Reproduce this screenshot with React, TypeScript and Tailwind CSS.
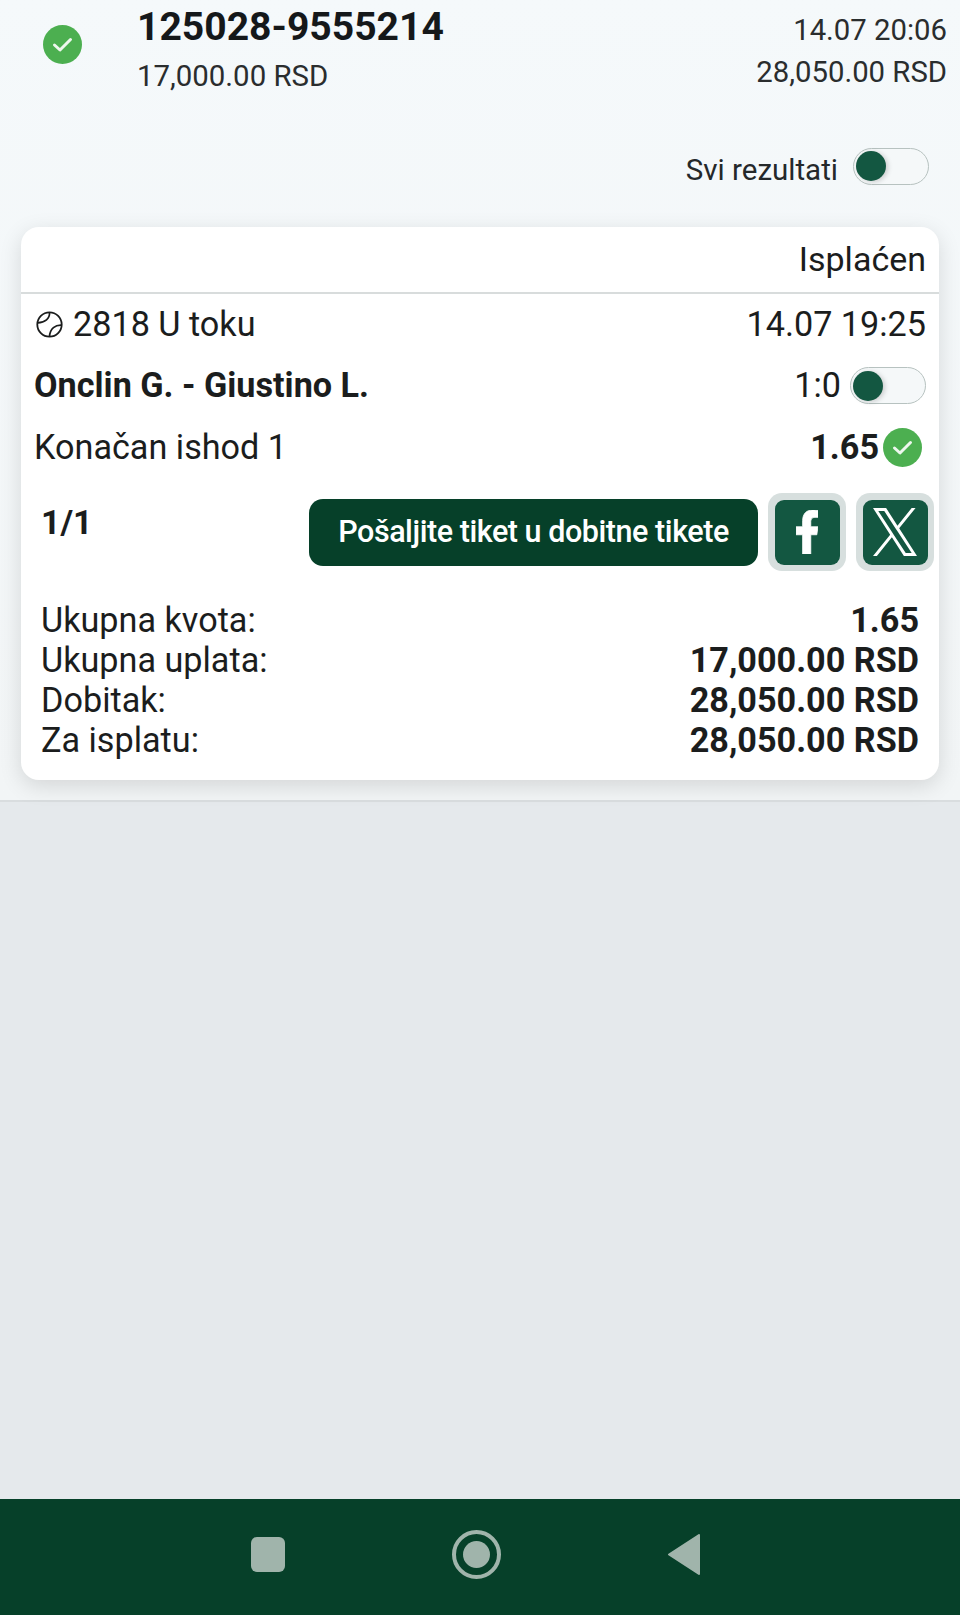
import React from "react";

function CheckBadge() {
  return (
    <svg width="39" height="39" viewBox="0 0 39 39" className="block shrink-0">
      <circle cx="19.5" cy="19.5" r="19.5" fill="#4caf50" />
      <path d="M11.5 20l5.5 5L27.5 14.5" fill="none" stroke="#eef7ee" strokeWidth="3" strokeLinecap="round" strokeLinejoin="round" />
    </svg>
  );
}

function Toggle() {
  return (
    <div className="w-[76px] h-[37px] rounded-full border border-[#b7c2c0] bg-[#f5f8f9] flex items-center pl-[2px] shrink-0">
      <div className="w-[30px] h-[30px] rounded-full bg-[#135741] shadow-[2px_1px_5px_rgba(0,0,0,0.18)]" />
    </div>
  );
}

function Ball() {
  return (
    <svg width="27" height="27" viewBox="0 0 27 27" className="block shrink-0">
      <circle cx="13.5" cy="13.5" r="12.2" fill="none" stroke="#1a1c1c" strokeWidth="1.8" />
      <path d="M13.5 1.4C14 7.5 9 11.5 1.5 11.8" fill="none" stroke="#1a1c1c" strokeWidth="1.7" />
      <path d="M25.6 14.2C19.5 13.8 14 17.5 13.5 25.6" fill="none" stroke="#1a1c1c" strokeWidth="1.7" />
    </svg>
  );
}

function Tile({ children }: { children: React.ReactNode }) {
  return (
    <div className="w-[78px] h-[78px] rounded-[14px] bg-[#d7dfde] flex items-center justify-center shrink-0">
      <div className="w-[65px] h-[65px] rounded-[9px] bg-[#135741] flex items-center justify-center">
        {children}
      </div>
    </div>
  );
}

function Sum({ label, value }: { label: string; value: string }) {
  return (
    <div className="flex justify-between items-center h-[40px] text-[34.2px]">
      <span>{label}</span>
      <span className="font-bold">{value}</span>
    </div>
  );
}

export default function App() {
  return (
    <div className="w-[960px] h-[1615px] flex flex-col overflow-hidden text-[#1b1d1d] bg-[#e5e9ec] font-['Roboto',sans-serif]">
      <div className="h-[802px] shrink-0 border-b-2 border-[#d9dddf] bg-gradient-to-b from-[#f5f9fb] to-[#f2f5f6] flex flex-col">
        <div className="h-[148px] shrink-0 flex pr-[13px]">
          <div className="w-[137px] pl-[43px] pt-[25px] shrink-0">
            <CheckBadge />
          </div>
          <div className="flex-1 flex flex-col">
            <div className="h-[53px] text-[39.1px] font-bold leading-[54px] text-[#15181a]">125028-9555214</div>
            <div className="h-[48px] text-[29.4px] leading-[46px] text-[#2a2d2e]">17,000.00 RSD</div>
          </div>
          <div className="flex flex-col items-end text-[29.3px] text-[#2a2d2e]">
            <div className="h-[51px] pt-[10px] leading-[40px]">14.07 20:06</div>
            <div className="h-[40px] leading-[42px]">28,050.00 RSD</div>
          </div>
        </div>
        <div className="h-[36px] shrink-0 flex items-center justify-end pr-[31px] gap-[15px]">
          <span className="text-[29.5px] pt-[8px] text-[#24282a]">Svi rezultati</span>
          <Toggle />
        </div>
        <div className="mx-[21px] mt-[43px] h-[553px] rounded-[18px] bg-white shadow-[0_6px_22px_rgba(0,0,0,0.13)] flex flex-col">
          <div className="h-[67px] shrink-0 border-b-2 border-[#d8dcdc] flex items-center justify-end pr-[13px] text-[34px]">
            Isplaćen
          </div>
          <div className="h-[62px] shrink-0 flex items-center justify-between pl-[15px] pr-[13px] text-[34.2px]">
            <div className="flex items-center gap-[10px]">
              <Ball />
              <span>2818 U toku</span>
            </div>
            <span>14.07 19:25</span>
          </div>
          <div className="h-[60px] shrink-0 flex items-center justify-between pl-[13px] pr-[13px] text-[34.2px]">
            <span className="font-bold">Onclin G. - Giustino L.</span>
            <div className="flex items-center gap-[9px]">
              <span>1:0</span>
              <Toggle />
            </div>
          </div>
          <div className="h-[64px] shrink-0 flex items-center justify-between pl-[13px] pr-[17px] text-[34.2px]">
            <span>Konačan ishod 1</span>
            <div className="flex items-center gap-[4px]">
              <span className="font-bold">1.65</span>
              <CheckBadge />
            </div>
          </div>
          <div className="mt-[13px] h-[78px] shrink-0 flex pl-[20px] pr-[5px]">
            <div className="flex-1 text-[34px] font-bold leading-[58px]">1/1</div>
            <div className="flex items-center gap-[10px]">
              <div className="w-[449px] h-[67px] rounded-[14px] bg-[#064029] text-white text-[30.5px] tracking-[-0.45px] font-medium flex items-center justify-center">
                Pošaljite tiket u dobitne tikete
              </div>
              <Tile>
                <svg width="22" height="44" viewBox="22 0 272 512" preserveAspectRatio="none" className="block">
                  <path fill="#ffffff" stroke="#ffffff" strokeWidth="10" d="M279.14 288l14.22-92.66h-88.91v-60.13c0-25.35 12.42-50.06 52.24-50.06h40.42V6.26S260.43 0 225.36 0c-73.22 0-121.08 44.38-121.08 124.72v70.62H22.89V288h81.39v224h100.17V288z" />
                </svg>
              </Tile>
              <Tile>
                <svg width="44" height="48" viewBox="0 0 1200 1227" preserveAspectRatio="none" className="block">
                  <path fill="#ffffff" fillRule="evenodd" d="M714.163 519.284L1160.89 0H1055.03L667.137 450.887L357.328 0H0L468.492 681.821L0 1226.37H105.866L515.491 750.218L842.672 1226.37H1200L714.137 519.284H714.163ZM569.165 687.828L521.697 619.934L144.011 79.6944H306.615L611.412 515.685L658.88 583.579L1055.08 1150.3H892.476L569.165 687.854V687.828Z" />
                </svg>
              </Tile>
            </div>
          </div>
          <div className="mt-[30px] pl-[20px] pr-[20px] flex flex-col">
            <Sum label="Ukupna kvota:" value="1.65" />
            <Sum label="Ukupna uplata:" value="17,000.00 RSD" />
            <Sum label="Dobitak:" value="28,050.00 RSD" />
            <Sum label="Za isplatu:" value="28,050.00 RSD" />
          </div>
        </div>
      </div>
      <div className="flex-1" />
      <div className="h-[116px] shrink-0 bg-[#064029] flex items-center justify-between pl-[251px] pr-[259px] pb-[5px]">
        <div className="w-[34px] h-[35px] rounded-[6px] bg-[#a0b4ab]" />
        <div className="w-[49px] h-[49px] rounded-full border-[4px] border-[#a0b4ab] flex items-center justify-center">
          <div className="w-[27px] h-[27px] rounded-full bg-[#a0b4ab]" />
        </div>
        <svg width="33" height="41" viewBox="0 0 33 41" className="block">
          <path d="M1 20.5L31 1v39z" fill="#a0b4ab" stroke="#a0b4ab" strokeWidth="2" strokeLinejoin="round" />
        </svg>
      </div>
    </div>
  );
}
